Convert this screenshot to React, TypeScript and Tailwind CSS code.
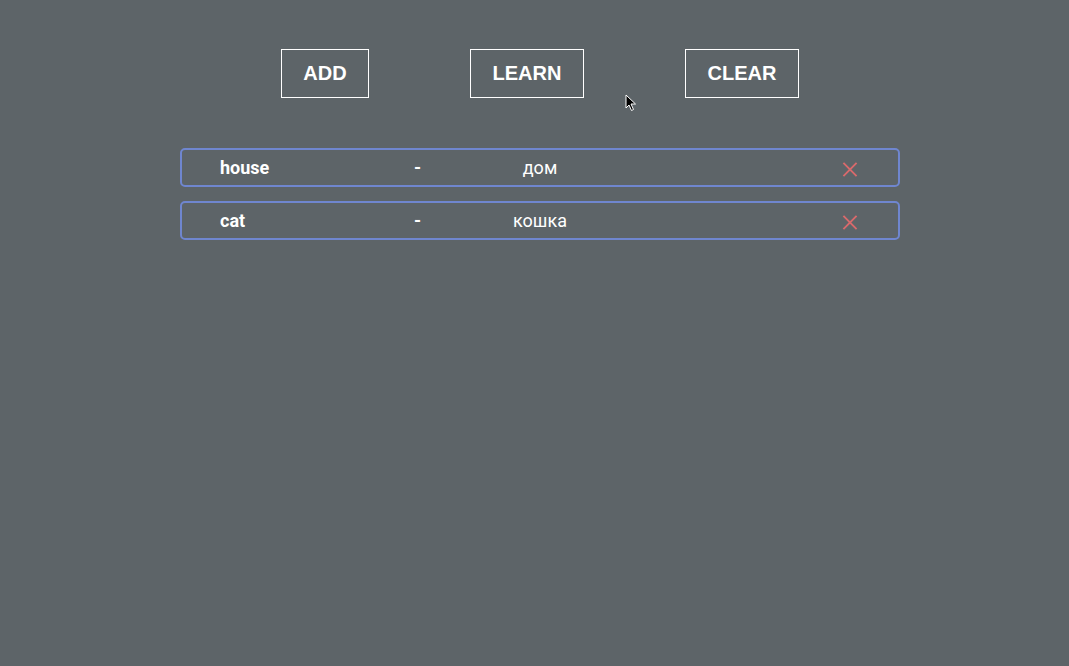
import React, { useState } from 'react';

type Word = { id: number; en: string; ru: string };

const App: React.FC = () => {
  const [words, setWords] = useState<Word[]>([
    { id: 1, en: 'house', ru: 'дом' },
    { id: 2, en: 'cat', ru: 'кошка' },
  ]);

  const removeWord = (id: number) => {
    setWords(prev => prev.filter(w => w.id !== id));
  };

  return (
    <div className="relative min-h-[666px] w-full bg-[#5d6468] font-['Roboto',sans-serif] text-white">
      {/* Toolbar */}
      <div className="flex justify-center gap-[101px] pt-[49px] pl-[11px]">
        <button className="h-[49px] w-[88px] border border-white pb-[2px] font-['Liberation_Sans',Arial,sans-serif] text-[20px] font-bold">
          ADD
        </button>
        <button className="h-[49px] w-[114px] border border-white pb-[2px] font-['Liberation_Sans',Arial,sans-serif] text-[20px] font-bold">
          LEARN
        </button>
        <button
          onClick={() => setWords([])}
          className="h-[49px] w-[114px] border border-white pb-[2px] font-['Liberation_Sans',Arial,sans-serif] text-[20px] font-bold"
        >
          CLEAR
        </button>
      </div>

      {/* Word list */}
      <div className="mt-[50px] flex flex-col items-center gap-[14px] pl-[11px]">
        {words.map(w => (
          <div
            key={w.id}
            className="flex h-[39px] w-[720px] items-center rounded-[5px] border-2 border-[#6f86cf] pl-[38px] pr-[40px] text-[18px]"
          >
            <span className="w-[194px] font-bold">{w.en}</span>
            <span className="w-[6px] font-bold">-</span>
            <span className="w-[240px] text-center font-normal">{w.ru}</span>
            <button onClick={() => removeWord(w.id)} className="ml-auto mt-[3px] flex h-4 w-4 items-center justify-center">
              <svg width="17" height="17" viewBox="0 0 17 17" fill="none">
                <path d="M1.5 1.5 L15.5 15.5 M15.5 1.5 L1.5 15.5" stroke="#d96a6c" strokeWidth="2" />
              </svg>
            </button>
          </div>
        ))}
      </div>

      {/* Mouse cursor */}
      <svg className="absolute left-[625px] top-[94px]" width="12" height="18" viewBox="0 0 12 18">
        <path d="M1 1 L1 14 L4 11 L6.5 16.5 L8.5 15.5 L6 10 L10.5 10 Z" fill="#000" stroke="#fff" strokeWidth="1" />
      </svg>
    </div>
  );
};

export default App;
